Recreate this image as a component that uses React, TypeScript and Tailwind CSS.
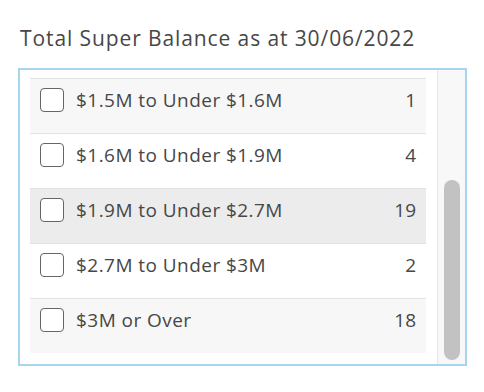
const rows = [
  { label: "$1.5M to Under $1.6M", count: 1, bg: "bg-[#f7f7f7]" },
  { label: "$1.6M to Under $1.9M", count: 4, bg: "bg-white" },
  { label: "$1.9M to Under $2.7M", count: 19, bg: "bg-[#ececec]" },
  { label: "$2.7M to Under $3M", count: 2, bg: "bg-white" },
  { label: "$3M or Over", count: 18, bg: "bg-[#f7f7f7]" },
];

export default function App() {
  return (
    <div className="h-[392px] w-[484px] bg-white pl-[18px] pt-[25px] font-['Open_Sans',sans-serif] text-[#474747]">
      <h2 className="pl-[2px] text-[21px] leading-[26px] tracking-[0.9px]">Total Super Balance as at 30/06/2022</h2>
      <div className="mt-[17px] flex h-[298px] w-[449px] border-2 border-[#a9d4ee]">
        <div className="flex-1 pl-[10px] pr-[11px] pt-[8px]">
          {rows.map((r) => (
            <div
              key={r.label}
              className={`flex h-[55px] items-start border-t border-[#e2e2e2] pl-[10px] pr-[10px] pt-[9px] ${r.bg}`}
            >
              <span className="h-[24px] w-[24px] shrink-0 rounded-[4px] border-[1.5px] border-[#666] bg-white" />
              <span className="ml-[12px] flex-1 text-[19px] leading-[24px] tracking-[0.45px]">{r.label}</span>
              <span className="text-[19px] leading-[24px]">{r.count}</span>
            </div>
          ))}
        </div>
        <div className="flex w-[28px] justify-center border-l border-[#e6e6e6] bg-[#f8f8f8] pt-[110px]">
          <div className="h-[180px] w-[16px] rounded-full bg-[#c2c2c2]" />
        </div>
      </div>
    </div>
  );
}
